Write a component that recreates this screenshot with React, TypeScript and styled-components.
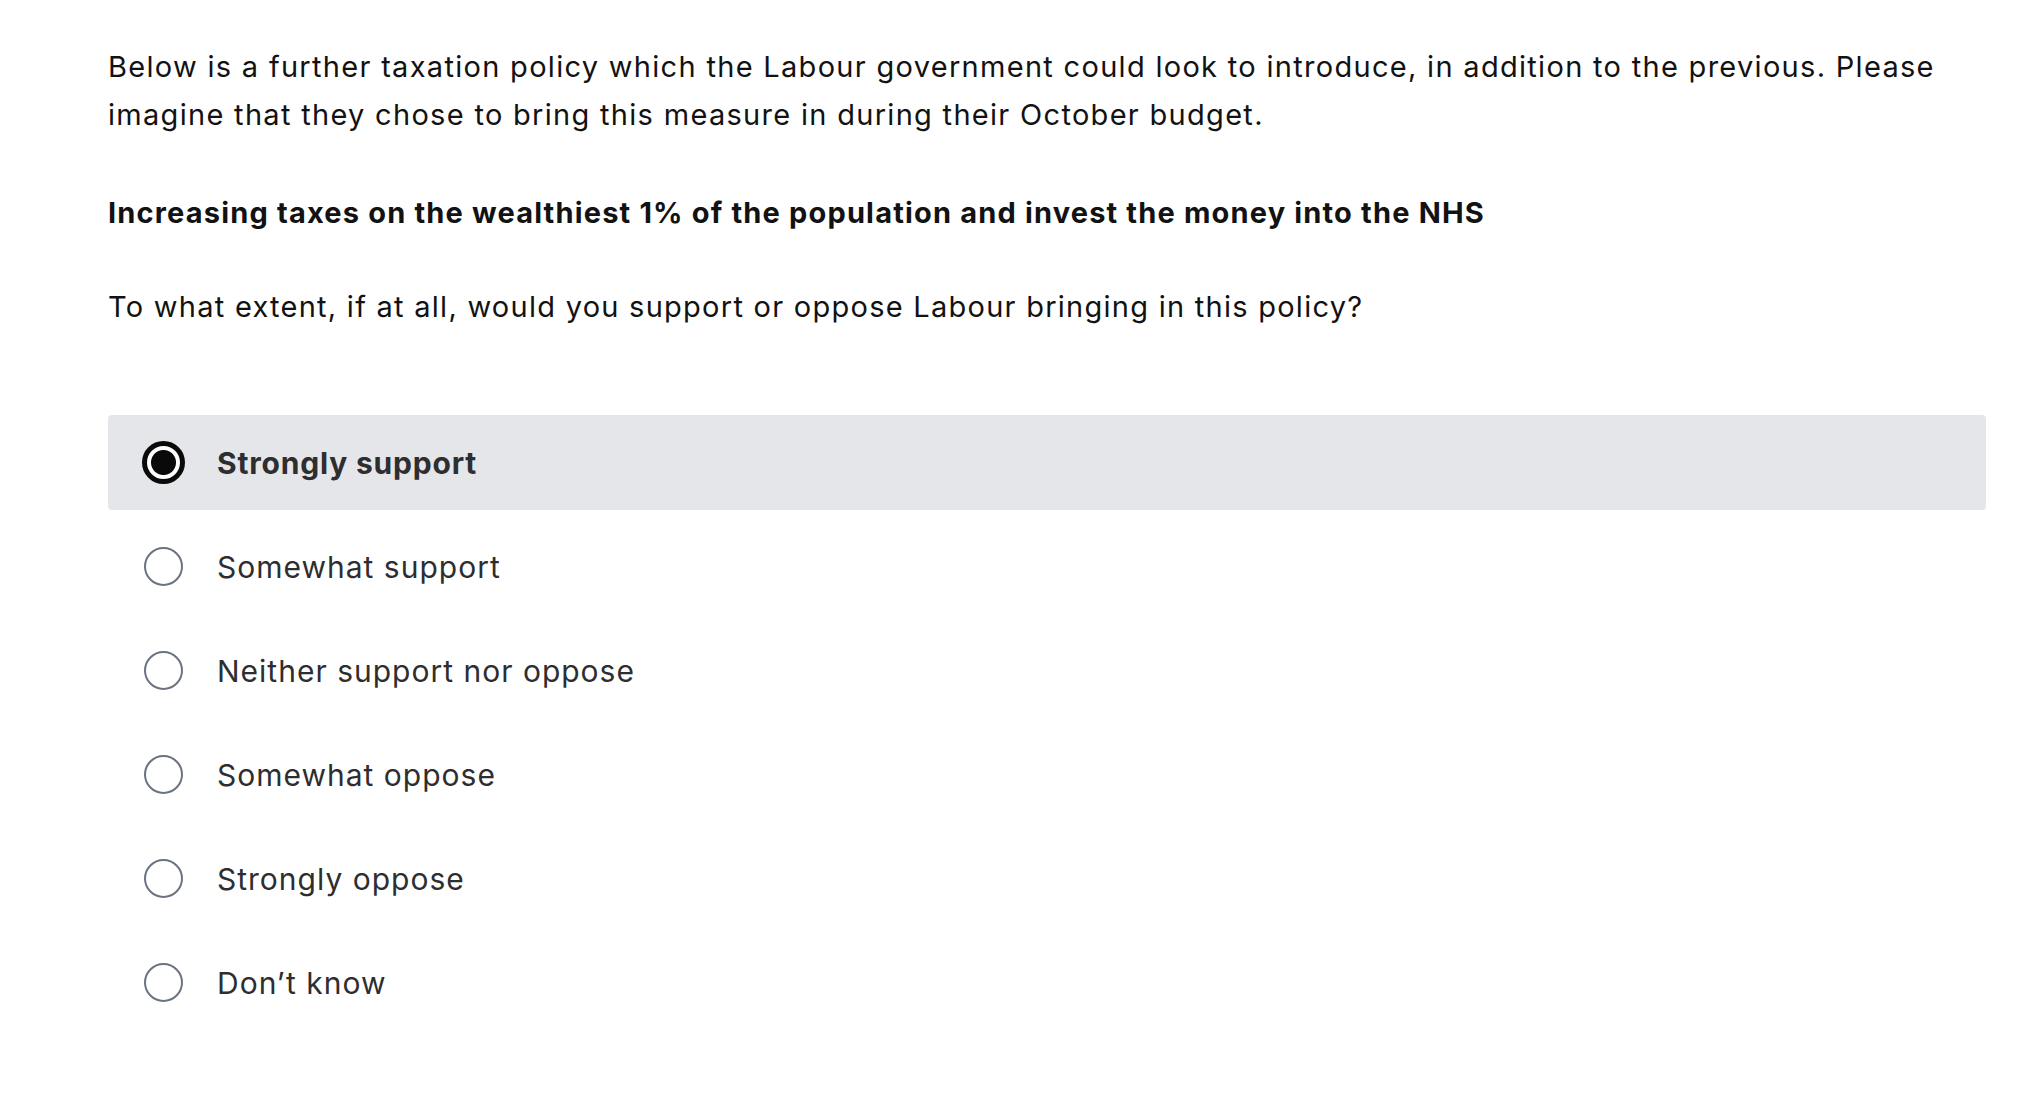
import styled, { createGlobalStyle } from 'styled-components';

const GlobalStyle = createGlobalStyle`
  body {
    margin: 0;
    background: #ffffff;
    font-family: 'Inter', 'Liberation Sans', sans-serif;
  }
`;

const options = [
  'Strongly support',
  'Somewhat support',
  'Neither support nor oppose',
  'Somewhat oppose',
  'Strongly oppose',
  'Don’t know',
];

const App = () => {
  const selected = 0;
  return (
    <>
      <GlobalStyle />
      <SurveyPage>
        <Intro>
          Below is a further taxation policy which the Labour government could look to introduce, in addition
          to the previous. Please imagine that they chose to bring this measure in during their October budget.
        </Intro>
        <Policy>Increasing taxes on the wealthiest 1% of the population and invest the money into the NHS</Policy>
        <Question>To what extent, if at all, would you support or oppose Labour bringing in this policy?</Question>
        <OptionList>
          {options.map((label, i) => (
            <OptionRow key={label} $active={i === selected}>
              <RadioSlot>
                <Radio $checked={i === selected} />
              </RadioSlot>
              <OptionLabel $active={i === selected}>{label}</OptionLabel>
            </OptionRow>
          ))}
        </OptionList>
      </SurveyPage>
    </>
  );
};

const SurveyPage = styled.div`
  padding: 43px 50px 0 108px;
  color: #121212;
`;

const Intro = styled.p`
  margin: 0;
  font-size: 29px;
  line-height: 48px;
  letter-spacing: 1.3px;
`;

const Policy = styled.p`
  margin: 50px 0 0;
  font-size: 29px;
  line-height: 48px;
  letter-spacing: 1.17px;
  font-weight: 700;
`;

const Question = styled.p`
  margin: 46px 0 0;
  font-size: 29px;
  line-height: 48px;
  letter-spacing: 1.26px;
`;

const OptionList = styled.div`
  margin-top: 84px;
  display: flex;
  flex-direction: column;
  gap: 9px;
`;

const OptionRow = styled.div<{ $active: boolean }>`
  height: 95px;
  display: flex;
  align-items: center;
  padding-left: 33px;
  border-radius: 4px;
  background: ${(p) => (p.$active ? '#e5e6ea' : 'transparent')};
  cursor: pointer;
`;

const RadioSlot = styled.div`
  width: 44px;
  height: 44px;
  display: flex;
  align-items: center;
  justify-content: center;
  margin-right: 32px;
`;

const Radio = styled.span<{ $checked: boolean }>`
  box-sizing: border-box;
  display: block;
  border-radius: 50%;
  width: ${(p) => (p.$checked ? '43px' : '39px')};
  height: ${(p) => (p.$checked ? '43px' : '39px')};
  border: ${(p) => (p.$checked ? '5px solid #0a0a0a' : '2px solid #6b7280')};
  background: ${(p) => (p.$checked ? 'radial-gradient(circle, #0a0a0a 0 12px, #ffffff 13px)' : '#ffffff')};
`;

const OptionLabel = styled.span<{ $active: boolean }>`
  font-size: 30px;
  letter-spacing: ${(p) => (p.$active ? '0.8px' : '1px')};
  font-weight: ${(p) => (p.$active ? 700 : 400)};
  color: #2e2e30;
`;

export default App;
